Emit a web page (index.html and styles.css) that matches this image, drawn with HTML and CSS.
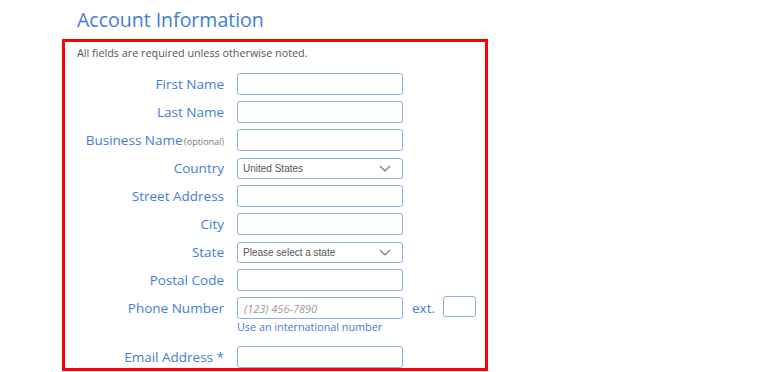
FILE: index.html
```html
<!DOCTYPE html>
<html lang="en">
<head>
    <meta charset="UTF-8">
    <meta name="viewport" content="width=device-width, initial-scale=1.0">
    <title>Account Information</title>
    <link rel="stylesheet" href="styles.css">
</head>
<body>
    <div class="page">
        <h1 class="title">Account Information</h1>
        <div class="form-box">
            <p class="note">All fields are required unless otherwise noted.</p>

            <div class="row">
                <label class="label">First Name</label>
                <input class="field" type="text">
            </div>
            <div class="row">
                <label class="label">Last Name</label>
                <input class="field" type="text">
            </div>
            <div class="row">
                <label class="label">Business Name <span class="optional">(optional)</span></label>
                <input class="field" type="text">
            </div>
            <div class="row">
                <label class="label">Country</label>
                <div class="select">
                    <span>United States</span>
                    <svg class="chevron" width="12" height="7" viewBox="0 0 12 7"><path d="M1 1l5 5 5-5" fill="none" stroke="#777" stroke-width="1.1"/></svg>
                </div>
            </div>
            <div class="row">
                <label class="label">Street Address</label>
                <input class="field" type="text">
            </div>
            <div class="row">
                <label class="label">City</label>
                <input class="field" type="text">
            </div>
            <div class="row">
                <label class="label">State</label>
                <div class="select">
                    <span>Please select a state</span>
                    <svg class="chevron" width="12" height="7" viewBox="0 0 12 7"><path d="M1 1l5 5 5-5" fill="none" stroke="#777" stroke-width="1.1"/></svg>
                </div>
            </div>
            <div class="row">
                <label class="label">Postal Code</label>
                <input class="field" type="text">
            </div>
            <div class="row phone-row">
                <label class="label">Phone Number</label>
                <input class="field" type="text" placeholder="(123) 456-7890">
                <span class="ext-label">ext.</span>
                <input class="field ext" type="text">
            </div>
            <div class="hint">Use an international number</div>
            <div class="row">
                <label class="label">Email Address *</label>
                <input class="field" type="text">
            </div>
        </div>
    </div>
</body>
</html>
```

FILE: styles.css
```css
body {
    margin: 0;
    padding: 0;
    background: #fff;
    font-family: "Open Sans", Arial, sans-serif;
}

.page {
    padding-left: 62px;
    width: 426px;
}

.title {
    margin: 5px 0 4px 15px;
    font-size: 19.5px;
    font-weight: 400;
    line-height: 30px;
    color: #3f7dd7;
}

.form-box {
    border: 3px solid #ff0000;
    padding: 0 0 0 12px;
    box-sizing: border-box;
    height: 332px;
    overflow: hidden;
}

.note {
    margin: 3px 0 12px;
    font-size: 10.8px;
    line-height: 16px;
    color: #555;
}

.row {
    display: flex;
    align-items: center;
    height: 22px;
    margin-bottom: 6px;
}

.label {
    width: 147px;
    margin-right: 13px;
    text-align: right;
    font-size: 13.5px;
    color: #3f7dd7;
    white-space: nowrap;
}

.optional {
    margin-left: -2px;
    font-size: 9px;
    color: #777;
}

.field {
    width: 166px;
    height: 22px;
    box-sizing: border-box;
    border: 1px solid #8eb1e4;
    border-radius: 3px;
    background: #fff;
    padding: 0 6px;
    font-family: "Open Sans", Arial, sans-serif;
    font-size: 11px;
}

.field::placeholder {
    font-style: italic;
    color: #999;
}

.select {
    width: 166px;
    height: 21px;
    box-sizing: border-box;
    border: 1px solid #8eb1e4;
    border-radius: 3px;
    display: flex;
    align-items: center;
    justify-content: space-between;
    padding: 0 11px 0 5px;
    font-family: "Liberation Sans", Arial, sans-serif;
    font-size: 10px;
    color: #555;
}

.chevron {
    margin-top: 1px;
}

.phone-row {
    margin-bottom: 0;
}

.ext-label {
    margin-left: 9px;
    font-size: 13.5px;
    color: #3f7dd7;
}

.field.ext {
    width: 33px;
    height: 21px;
    margin-left: 8px;
    margin-top: -3px;
}

.hint {
    margin: 0 0 0 160px;
    height: 27px;
    font-size: 10.8px;
    line-height: 16px;
    color: #3f7dd7;
}
```
